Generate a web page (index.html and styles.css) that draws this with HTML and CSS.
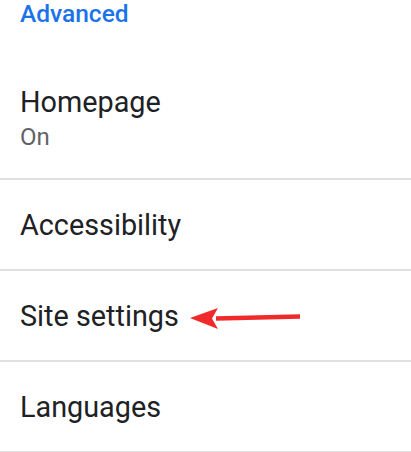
FILE: index.html
```html
<!DOCTYPE html>
<html lang="en">
<head>
  <meta charset="UTF-8">
  <meta name="viewport" content="width=device-width, initial-scale=1.0">
  <title>Settings</title>
  <link rel="stylesheet" href="styles.css">
</head>
<body>
  <div class="section-title">Advanced</div>

  <div class="pref-item pref-first">
    <div class="pref-title">Homepage</div>
    <div class="pref-summary">On</div>
  </div>

  <div class="pref-item">
    <div class="pref-title">Accessibility</div>
  </div>

  <div class="pref-item pref-marked">
    <div class="pref-title">Site settings</div>
    <!-- red annotation arrow -->
    <svg class="arrow" width="120" height="30" viewBox="0 0 120 30">
      <path d="M26 13.6 L110 11.6" stroke="#f02a2a" stroke-width="4.5" fill="none"/>
      <polygon points="0,13 28,3 22,13.5 28,24" fill="#f02a2a"/>
    </svg>
  </div>

  <div class="pref-item">
    <div class="pref-title">Languages</div>
  </div>
</body>
</html>
```

FILE: styles.css
```css
body {
  margin: 0;
  font-family: Roboto, "Noto Sans", sans-serif;
  background: #fff;
  color: #202124;
}
.section-title {
  color: #1a73e8;
  font-weight: 500;
  font-size: 24.5px;
  line-height: 28px;
  padding: 0 20px;
}
.pref-item {
  padding: 0 20px;
  height: 89px;
  display: flex;
  flex-direction: column;
  justify-content: center;
  border-bottom: 2px solid #e0e0e0;
}
.pref-first {
  height: auto;
  justify-content: flex-start;
  padding-top: 55px;
  padding-bottom: 24px;
}
.pref-title {
  font-size: 28.8px;
  line-height: 38px;
}
.pref-summary {
  font-size: 24px;
  line-height: 33px;
  color: #5f6368;
}
.pref-marked {
  position: relative;
}
.arrow {
  position: absolute;
  left: 190px;
  top: 34px;
}
```
